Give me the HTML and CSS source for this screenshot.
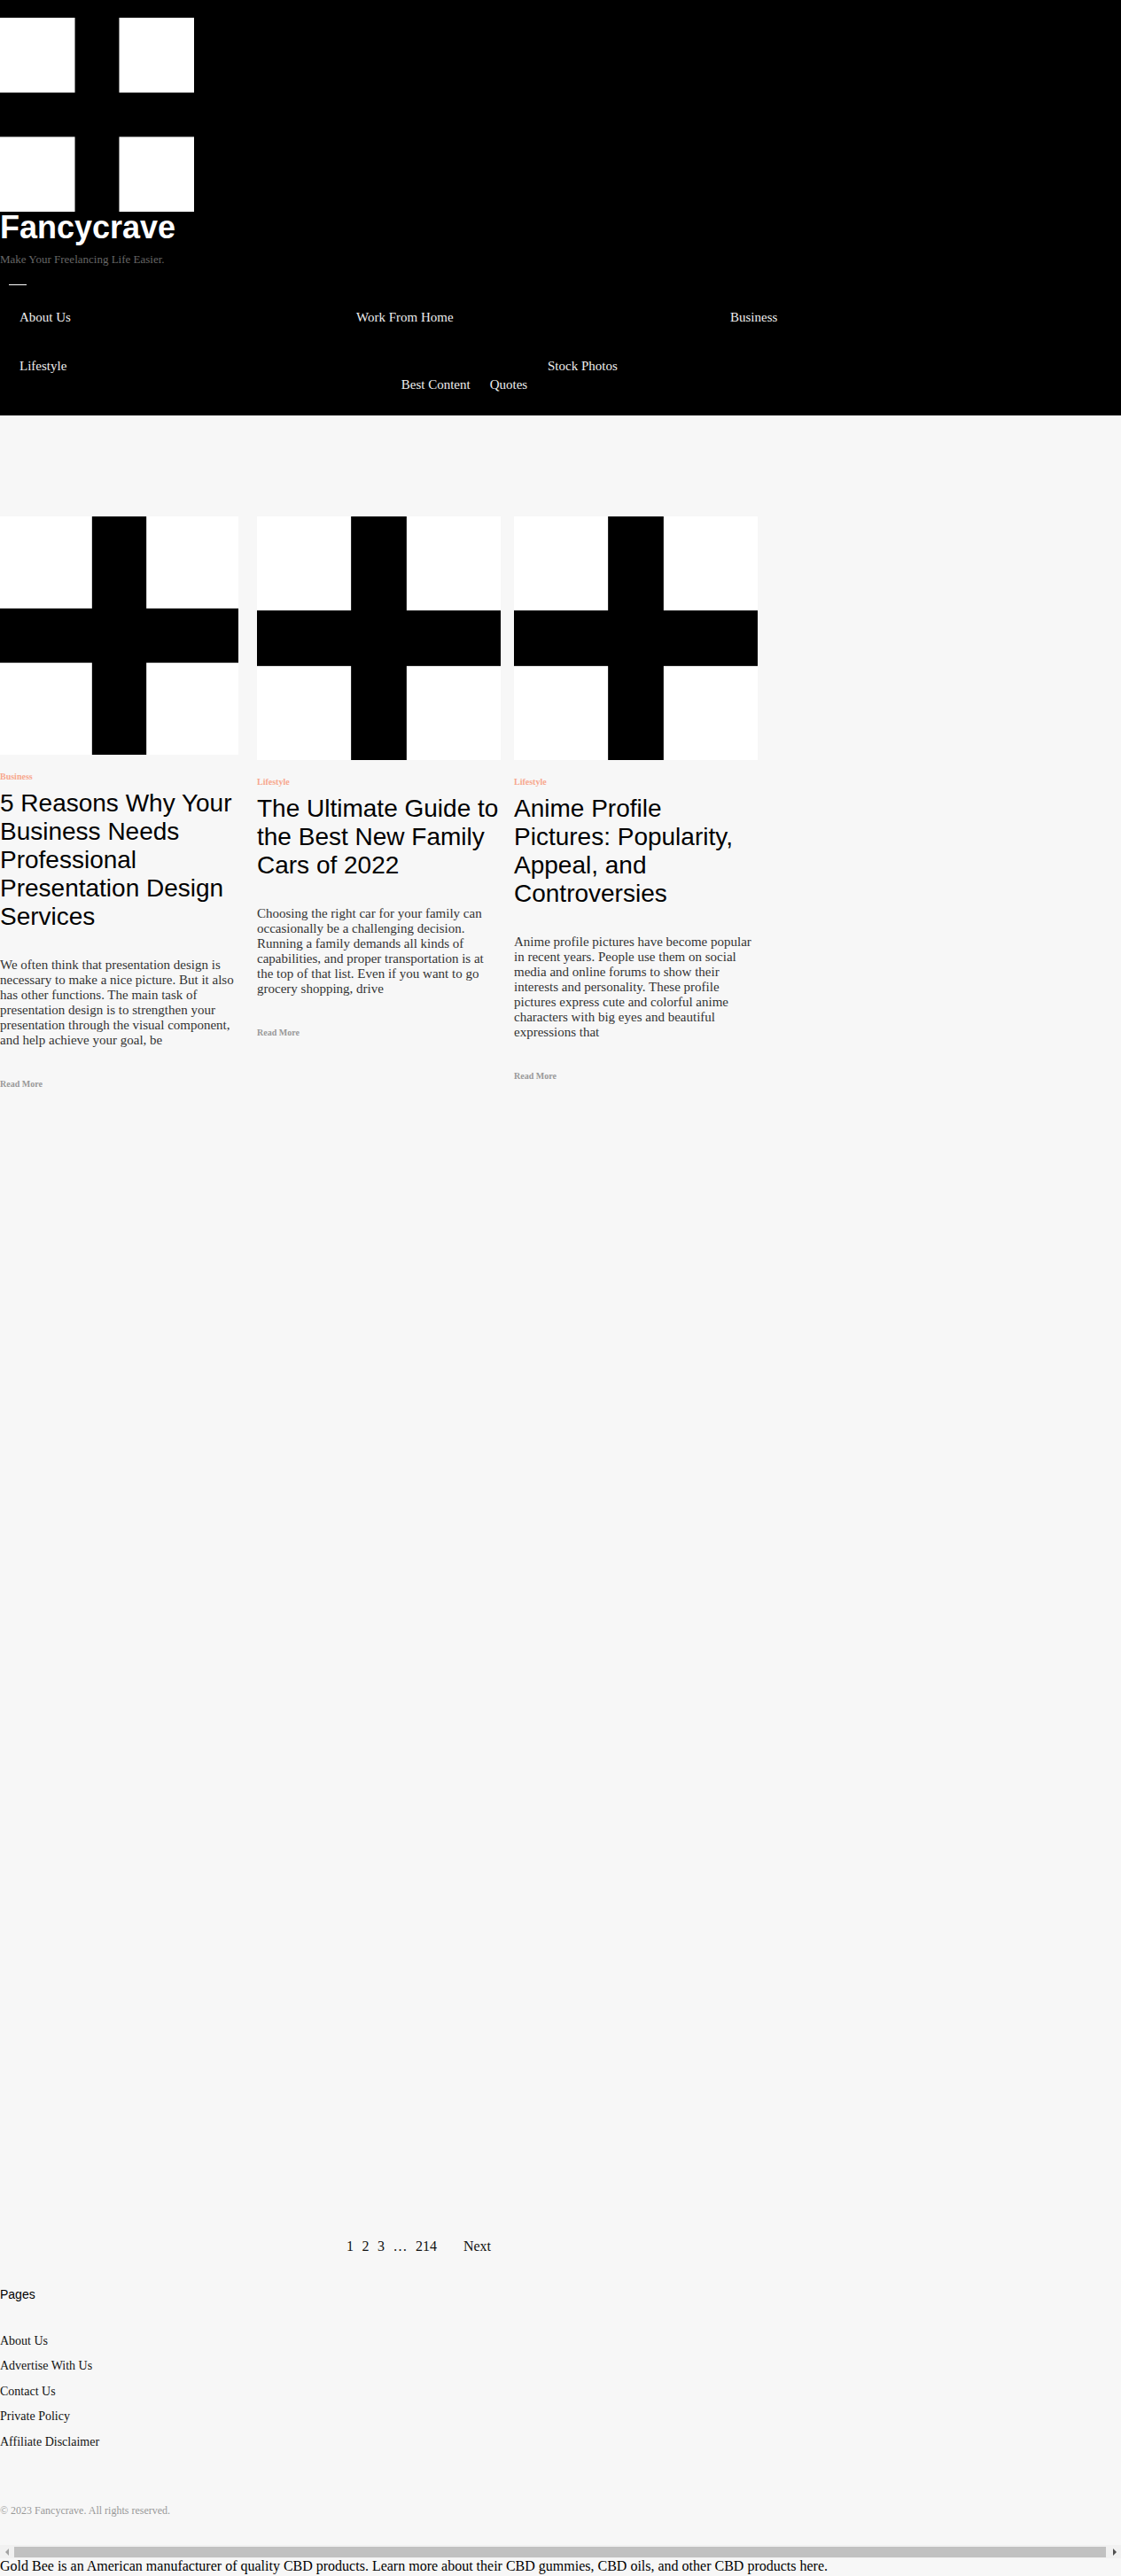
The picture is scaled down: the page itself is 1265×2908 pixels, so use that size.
FILE: index.html
```html
<!DOCTYPE html>
<html lang="en">
<head>
<meta charset="utf-8">
<title>Fancycrave – Make Your Freelancing Life Easier.</title>
<link rel="stylesheet" href="styles.css">
</head>
<body>
<header class="site-header">
  <a class="logo" href="#">
    <svg class="placeholder" viewBox="0 0 100 100" aria-hidden="true"><rect width="100" height="100" fill="#fff"/><rect x="38.6" width="22.8" height="100" fill="#000"/><rect y="38.6" width="100" height="22.8" fill="#000"/></svg>
  </a>
  <h1 class="site-title">Fancycrave</h1>
  <p class="tagline">Make Your Freelancing Life Easier.</p>
  <span class="menu-toggle"></span>
  <nav class="main-nav">
    <ul class="primary-menu">
      <li><a href="#">About Us</a></li>
      <li><a href="#">Work From Home</a></li>
      <li><a href="#">Business</a></li>
      <li><a href="#">Lifestyle</a></li>
      <li><a href="#">Stock Photos</a></li>
    </ul>
    <ul class="secondary-menu">
      <li><a href="#">Best Content</a></li>
      <li><a href="#">Quotes</a></li>
    </ul>
  </nav>
</header>

<main class="site-main">
  <section class="posts">
    <article class="card">
      <svg class="thumb thumb-sm" viewBox="0 0 100 100" aria-hidden="true"><rect width="100" height="100" fill="#fff"/><rect x="38.6" width="22.8" height="100" fill="#000"/><rect y="38.6" width="100" height="22.8" fill="#000"/></svg>
      <a class="cat" href="#">Business</a>
      <h2 class="card-title">5 Reasons Why Your Business Needs Professional Presentation Design Services</h2>
      <p class="excerpt">We often think that presentation design is necessary to make a nice picture. But it also has other functions. The main task of presentation design is to strengthen your presentation through the visual component, and help achieve your goal, be</p>
      <a class="more" href="#">Read More</a>
    </article>
    <article class="card">
      <svg class="thumb" viewBox="0 0 100 100" aria-hidden="true"><rect width="100" height="100" fill="#fff"/><rect x="38.6" width="22.8" height="100" fill="#000"/><rect y="38.6" width="100" height="22.8" fill="#000"/></svg>
      <a class="cat" href="#">Lifestyle</a>
      <h2 class="card-title">The Ultimate Guide to the Best New Family Cars of 2022</h2>
      <p class="excerpt">Choosing the right car for your family can occasionally be a challenging decision. Running a family demands all kinds of capabilities, and proper transportation is at the top of that list. Even if you want to go grocery shopping, drive</p>
      <a class="more" href="#">Read More</a>
    </article>
    <article class="card">
      <svg class="thumb" viewBox="0 0 100 100" aria-hidden="true"><rect width="100" height="100" fill="#fff"/><rect x="38.6" width="22.8" height="100" fill="#000"/><rect y="38.6" width="100" height="22.8" fill="#000"/></svg>
      <a class="cat" href="#">Lifestyle</a>
      <h2 class="card-title">Anime Profile Pictures: Popularity, Appeal, and Controversies</h2>
      <p class="excerpt">Anime profile pictures have become popular in recent years. People use them on social media and online forums to show their interests and personality. These profile pictures express cute and colorful anime characters with big eyes and beautiful expressions that</p>
      <a class="more" href="#">Read More</a>
    </article>
  </section>

  <nav class="pagination">
    <a href="#">1</a>
    <a href="#">2</a>
    <a href="#">3</a>
    <span>…</span>
    <a href="#">214</a>
    <a class="next" href="#">Next</a>
  </nav>
</main>

<footer class="site-footer">
  <h2 class="widget-title">Pages</h2>
  <ul class="footer-links">
    <li><a href="#">About Us</a></li>
    <li><a href="#">Advertise With Us</a></li>
    <li><a href="#">Contact Us</a></li>
    <li><a href="#">Private Policy</a></li>
    <li><a href="#">Affiliate Disclaimer</a></li>
  </ul>
  <p class="copyright">© 2023 Fancycrave. All rights reserved.</p>
  <div class="hscroll" aria-hidden="true">
    <span class="hs-arrow hs-left"></span>
    <span class="hs-thumb"></span>
    <span class="hs-arrow hs-right"></span>
  </div>
  <p class="promo">Gold Bee is an American manufacturer of quality CBD products. Learn more about their CBD gummies, CBD oils, and other CBD products here.</p>
</footer>
</body>
</html>
```
FILE: styles.css
```css
html, body {
  margin: 0;
  padding: 0;
}
body {
  background: #f7f7f7;
  font-family: "Liberation Serif", "Times New Roman", serif;
  color: #000;
}
a {
  text-decoration: none;
  color: inherit;
}
ul {
  list-style: none;
  margin: 0;
  padding: 0;
}

/* Header */
.site-header {
  background: #000;
  height: 469px;
  box-sizing: border-box;
  padding-top: 20px;
  overflow: hidden;
}
.logo {
  display: block;
  width: 219px;
  height: 219px;
}
.placeholder {
  display: block;
  width: 219px;
  height: 219px;
}
.site-title {
  margin: 0;
  font-family: "Liberation Sans", Arial, sans-serif;
  font-weight: bold;
  font-size: 36px;
  line-height: 1;
  color: #fff;
}
.tagline {
  margin: 10px 0 0;
  font-size: 13px;
  color: #666;
}
.menu-toggle {
  display: block;
  width: 20px;
  height: 1px;
  background: #fff;
  margin: 19.5px 0 0 10px;
}
.main-nav {
  margin-top: 9.5px;
  font-size: 15px;
  color: #eee;
}
.primary-menu {
  display: flex;
  flex-wrap: wrap;
  width: 920px;
}
.primary-menu li {
  flex: none;
  box-sizing: border-box;
  padding: 19px 22px;
}
.primary-menu li:nth-child(1) { width: 380px; }
.primary-menu li:nth-child(2) { width: 422px; }
.primary-menu li:nth-child(4) { width: 596px; }
.secondary-menu {
  display: flex;
  justify-content: center;
  gap: 22px;
  width: 1048px;
  margin-top: -15px;
}

/* Posts */
.site-main {
  width: 945px;
  padding-top: 114px;
}
.posts {
  display: grid;
  grid-template-columns: repeat(3, 275px);
  column-gap: 15px;
  align-items: start;
  min-height: 1944px;
}
.card {
  display: flex;
  flex-direction: column;
  align-items: flex-start;
}
.thumb {
  display: block;
  width: 275px;
  height: 275px;
}
.thumb-sm {
  width: 269px;
  height: 269px;
}
.cat {
  margin-top: 19px;
  font-size: 10px;
  font-weight: bold;
  color: #f7a78d;
}
.card-title {
  margin: 9px 0 0;
  font-family: "Liberation Sans", Arial, sans-serif;
  font-weight: normal;
  font-size: 28px;
  line-height: normal;
  color: #000;
}
.excerpt {
  margin: 30px 0 0;
  font-size: 15px;
  color: #333;
}
.more {
  margin-top: 35px;
  font-size: 10px;
  font-weight: bold;
  color: #999;
}

/* Pagination */
.pagination {
  display: flex;
  justify-content: center;
  gap: 9.5px;
  font-size: 16px;
  color: #111;
}
.pagination .next {
  margin-left: 20.5px;
}

/* Footer */
.site-footer {
  padding-top: 36.6px;
}
.widget-title {
  margin: 0;
  font-family: "Liberation Sans", Arial, sans-serif;
  font-weight: normal;
  font-size: 14px;
  color: #000;
}
.footer-links {
  margin-top: 30.7px;
  font-size: 14px;
  color: #111;
}
.footer-links li {
  padding: 6.3px 0;
}
.copyright {
  margin: 55.8px 0 0;
  font-size: 12px;
  color: #999;
}
.hscroll {
  display: flex;
  align-items: center;
  height: 15px;
  margin-top: 31.2px;
  background: #f1f1f1;
}
.hs-arrow {
  flex: none;
  width: 15px;
  height: 15px;
  display: flex;
  align-items: center;
  justify-content: center;
}
.hs-arrow::before {
  content: "";
  width: 0;
  height: 0;
  border-top: 4px solid transparent;
  border-bottom: 4px solid transparent;
}
.hs-left::before {
  border-right: 4px solid #a3a3a3;
}
.hs-right::before {
  border-left: 4px solid #505050;
}
.hs-thumb {
  flex: 1;
  height: 12px;
  margin: 1px 2px 0 1px;
  background: #c1c1c1;
}
.promo {
  margin: 0;
  font-size: 16px;
  color: #000;
}
```
